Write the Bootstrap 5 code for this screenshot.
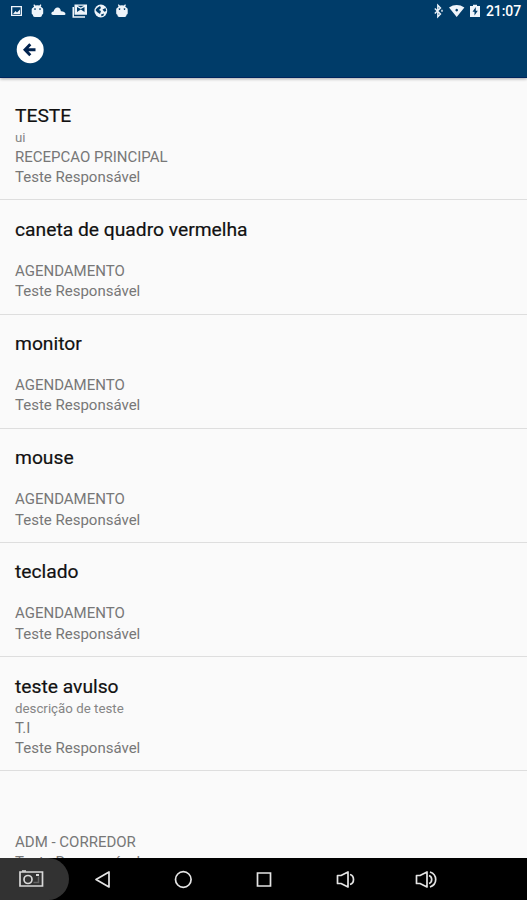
<!DOCTYPE html>
<html lang="pt-BR">
<head>
<meta charset="utf-8">
<meta name="viewport" content="width=device-width, initial-scale=1">
<title>Lista</title>
<link href="https://cdn.jsdelivr.net/npm/bootstrap@5.3.0/dist/css/bootstrap.min.css" rel="stylesheet">
<style>
body{font-family:Roboto,"Liberation Sans",sans-serif;background:#fafafa}
svg{display:block;flex:none}
.app-head{height:78px;background:#003c69;border-bottom:1px solid #00245c;box-shadow:0 1px 3px #0005;z-index:1}
.status{height:22px;padding:0 6px 0 9px}
.clock{font-size:14px;font-weight:500;line-height:22px;width:36px;letter-spacing:-.1px}
.toolbar{padding:14px 0 0 16px}
.items{padding-top:8.2px}
.entry{height:114.2px;padding:17.5px 15px 0;border-bottom:1px solid #dedede}
.entry-name{font-size:19.25px;line-height:24px;height:24px;color:#111;-webkit-text-stroke:.2px #111}
.entry-desc{font-size:13.3px;line-height:19px;height:19px;color:#858585}
.entry-info{font-size:15px;line-height:20.3px;color:#777}
.sys{height:42px;background:#000;z-index:1}
.sys-btn{width:69px;height:42px;padding-left:18px;background:#323232;border-radius:0 21px 21px 0}
</style>
</head>
<body>
<div class="vh-100 d-flex flex-column overflow-hidden">
<header class="app-head flex-shrink-0 position-relative">
  <div class="status d-flex align-items-center justify-content-between">
    <svg width="132" height="22" viewBox="9 0 132 22" fill="#eef4fa">
      <path fill-rule="evenodd" d="M11 6h11v10H11zM12.300 7.300v7.400h8.400V7.300z"/><path d="M13 14l2.500-3 1.500 1.500 3-3V14z"/>
      <g id="droid"><path fill-rule="evenodd" d="M32.600 8l1.500-1.500L33.400 5l.8-.7 1.200 1.300q2-.7 4 0L40.600 4.300l.8.7-.7 1.500L42.400 8q.8 0 .8 1.500v4q-.2 1-1 1-.4 2.600-2 2.600h-5.500q-1.600 0-2-2.600-.8 0-1-1v-4q0-1.500.9-1.500zM35 8.200a.8.8 0 1 0 .01 0zM40 8.200a.8.8 0 1 0 .01 0z"/></g>
      <use href="#droid" x="84.500"/>
      <path d="M53 15q-1.800-.2-1.700-1.800.2-1.600 2.200-1.600 1.500-4.300 4.400-4 2.300.2 3 3.600 3.900-.1 4.600 2.600 0 1.200-1.200 1.200z"/>
      <path fill-rule="evenodd" d="M74.500 4.500h12.500v10.300H74.500zM77 7v5l3.800-2.500L84.500 12V7l-3.700 2zM77.500 5.800l3.300 1.700L84 5.800z"/><path d="M72.500 7H74v9.300h11v1.500H72.500z"/>
      <circle cx="100.800" cy="11" r="6.400"/><path fill="#003c69" d="M97 8l3-2 1 2-2 2 2 1-1 3-3-2-1.500-2zM102.500 9.500l3-1.500.8 3-2 .8zM101 14.500l3-1-.5 2-2 .8z"/>
    </svg>
    <div class="d-flex align-items-center">
      <svg width="51" height="22" viewBox="434 0 51 22" fill="#eef4fa">
        <path d="M434.800 8.500l5.700 5.500-2.700 2.800V5.200l2.700 2.800-5.700 5.500M442 9.800v2" fill="none" stroke="#eef4fa" stroke-width="1.400"/>
        <path fill-rule="evenodd" d="M449 7.500q7.700-4.800 15.400 0L456.700 17zM456.700 8.800a1.300 1.300 0 1 0 .01 0z"/>
        <path fill-rule="evenodd" d="M470 6h3V4.700h4V6h3v11h-10zM475.800 7l-3.300 4.800h2v3.700l3.300-4.800h-2z"/>
      </svg>
      <span class="clock text-white text-end">21:07</span>
    </div>
  </div>
  <div class="toolbar">
    <svg width="28" height="28" viewBox="0 0 28 28"><circle cx="14.200" cy="13.800" r="13.500" fill="#fff"/><path d="M14.300 8.200L9 13.800l5.300 5.500M9.500 13.800h10" fill="none" stroke="#00234f" stroke-width="2.900"/></svg>
  </div>
</header>
<main class="items flex-grow-1 overflow-hidden">
  <section class="entry"><div class="entry-name">TESTE</div><div class="entry-desc">ui</div><div class="entry-info">RECEPCAO PRINCIPAL</div><div class="entry-info">Teste Responsável</div></section>
  <section class="entry"><div class="entry-name">caneta de quadro vermelha</div><div class="entry-desc"></div><div class="entry-info">AGENDAMENTO</div><div class="entry-info">Teste Responsável</div></section>
  <section class="entry"><div class="entry-name">monitor</div><div class="entry-desc"></div><div class="entry-info">AGENDAMENTO</div><div class="entry-info">Teste Responsável</div></section>
  <section class="entry"><div class="entry-name">mouse</div><div class="entry-desc"></div><div class="entry-info">AGENDAMENTO</div><div class="entry-info">Teste Responsável</div></section>
  <section class="entry"><div class="entry-name">teclado</div><div class="entry-desc"></div><div class="entry-info">AGENDAMENTO</div><div class="entry-info">Teste Responsável</div></section>
  <section class="entry"><div class="entry-name">teste avulso</div><div class="entry-desc">descrição de teste</div><div class="entry-info">T.I</div><div class="entry-info">Teste Responsável</div></section>
  <section class="entry"><div class="entry-name"></div><div class="entry-desc"></div><div class="entry-info">ADM - CORREDOR</div><div class="entry-info">Teste Responsável</div></section>
</main>
<nav class="sys flex-shrink-0 d-flex align-items-center">
  <div class="sys-btn d-flex align-items-center">
    <svg width="26" height="22" viewBox="18 868 26 22" fill="none" stroke="#d8d8d8"><path stroke-width="1.700" d="M20 872h22.500v14H20z"/><path stroke-width="1.500" d="M22 871h4"/><circle cx="28" cy="879.500" r="4" stroke-width="1.700"/><path stroke="#666" stroke-width="1.500" d="M33.500 882.500h5v-6"/><path stroke-width="2" d="M36 875h3"/></svg>
  </div>
  <svg width="400" height="42" viewBox="69 858 400 42" fill="none" stroke="#e4e4e4" stroke-width="1.700" stroke-linejoin="round">
    <path d="M109 872v15l-13-7.500z"/>
    <circle cx="183.300" cy="879.500" r="7.800"/>
    <path stroke-linejoin="miter" d="M257.500 873h13v13h-13z"/>
    <path d="M337.500 875.500h3.500l7-3.500v15l-7-3.500h-3.500zM350 874.500q3.500 1 3.500 5t-3.500 5"/>
    <path d="M416.500 875.500h3.500l7-3.500v15l-7-3.500h-3.500zM429 875.500q2.700 1 2.700 4t-2.700 4M430 872q5.700 2 5.700 7.500t-5.700 7.500"/>
  </svg>
</nav>
</div>
<script src="https://cdn.jsdelivr.net/npm/bootstrap@5.3.0/dist/js/bootstrap.bundle.min.js"></script>
</body>
</html>
